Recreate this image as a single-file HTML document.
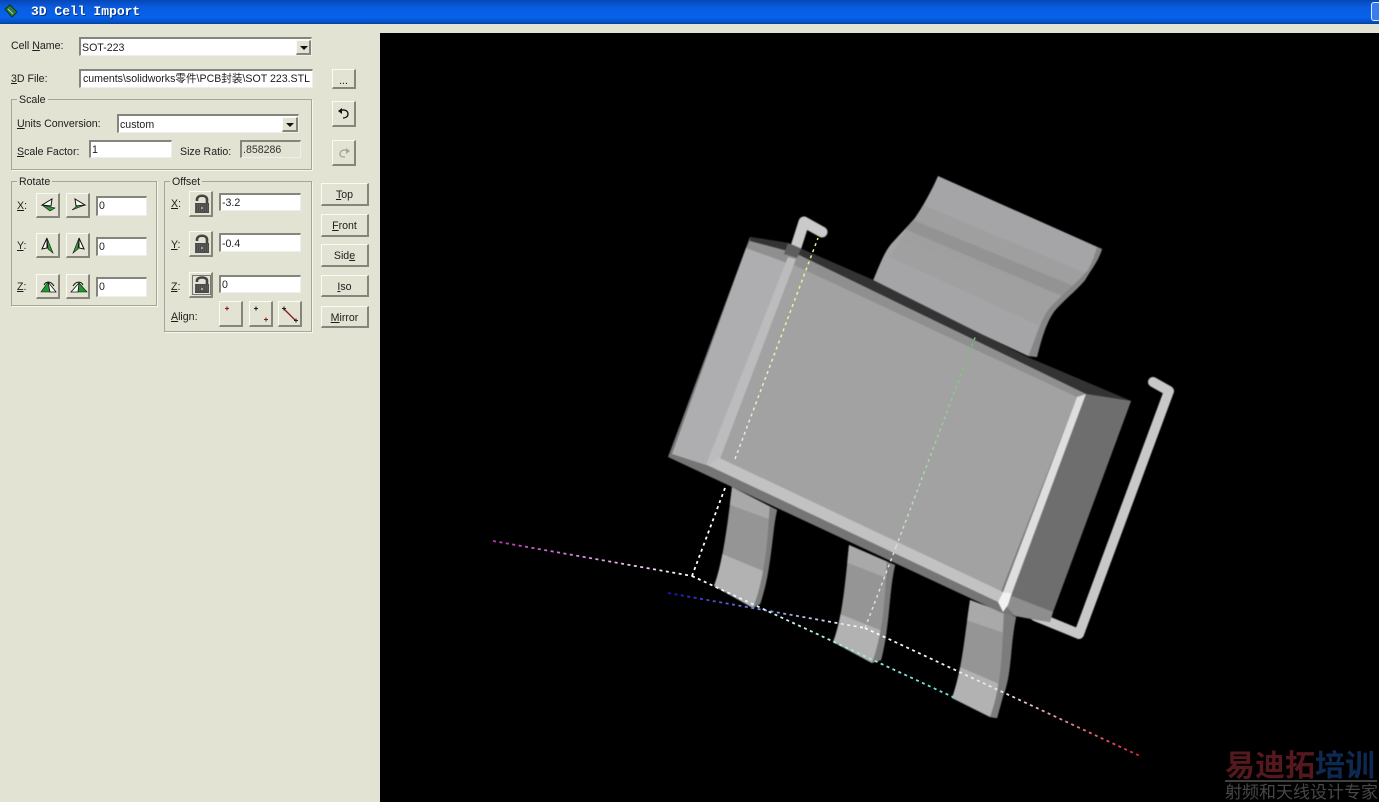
<!DOCTYPE html>
<html><head><meta charset="utf-8"><title>3D Cell Import</title>
<style>
html,body{margin:0;padding:0;background:#e3e3d4;width:1379px;height:802px;overflow:hidden}
body{position:relative;font-family:"Liberation Sans","Noto Sans CJK SC",sans-serif;font-size:10.6px;color:#1c1c1c}
.a{position:absolute}
.t{position:absolute;white-space:nowrap;line-height:13px;margin-top:1px}
.in{position:absolute;box-sizing:border-box;background:#fff;border-top:2px solid #85857c;border-left:2px solid #85857c;border-right:1px solid #eee;border-bottom:1px solid #eee;line-height:14px;padding:2px 0 0 1px;white-space:nowrap;overflow:hidden}
.b{position:absolute;box-sizing:border-box;background:#e3e3d4;border-top:1px solid #fbfbf5;border-left:1px solid #fbfbf5;border-right:2px solid #85857c;border-bottom:2px solid #85857c;text-align:center;line-height:23px}
.g{position:absolute;box-sizing:border-box;border:1px solid #a5a59a;box-shadow:1px 1px 0 #f6f6ee}
.l{position:absolute;background:#e3e3d4;padding:0 2px;line-height:13px;top:-6px;left:5px}
.ar{position:absolute;box-sizing:border-box;background:#e3e3d4;border-top:1px solid #fbfbf5;border-left:1px solid #fbfbf5;border-right:2px solid #85857c;border-bottom:2px solid #85857c}
.ar:after{content:"";position:absolute;left:3px;top:5px;border-left:4px solid transparent;border-right:4px solid transparent;border-top:4px solid #111}
.b svg{position:absolute;left:0;top:0}
</style></head><body>
<div class="a" style="left:0;top:0;width:1379px;height:24px;background:linear-gradient(#0647b6 0,#0a5be0 30%,#0763ec 70%,#0650c4 92%,#043f9e 100%)"></div>
<svg class="a" style="left:3px;top:3px" width="16" height="16"><path d="M2 6L7 2L14 9L9 14Z" fill="#2f7a3a" stroke="#0c3312"/><path d="M5 6L10 11" stroke="#9bd08a"/></svg>
<div class="t" style="left:31px;top:4px;color:#fff;font:bold 13px/14px 'Liberation Mono',monospace;text-shadow:1px 1px 0 #07317c">3D Cell Import</div>
<div class="a" style="left:1371px;top:2px;width:10px;height:19px;background:#3a7bee;border:1px solid #dfe8fa;border-radius:3px;box-sizing:border-box"></div>
<div class="a" style="left:380px;top:33px;width:999px;height:769px;background:#000"></div>

<div class="t" style="left:11px;top:39px">Cell <u>N</u>ame:</div>
<div class="in" style="left:79px;top:37px;width:233px;height:19px">SOT-223</div>
<div class="ar" style="left:296px;top:40px;width:15px;height:15px"></div>
<div class="t" style="left:11px;top:72px"><u>3</u>D File:</div>
<div class="in" style="left:79px;top:69px;width:234px;height:19px;padding-left:0"><span style="position:absolute;right:2px;top:1px">cuments\solidworks零件\PCB封装\SOT 223.STL</span></div>
<div class="b" style="left:332px;top:69px;width:24px;height:20px">...</div>
<div class="b" style="left:332px;top:101px;width:24px;height:26px"><svg width="22" height="24"><path d="M7 9C10 7 15 8 15 12C15 15 12 16 10 16" fill="none" stroke="#111" stroke-width="1.3"/><path d="M5 9L9 6V12Z" fill="#111"/></svg></div>
<div class="b" style="left:332px;top:140px;width:24px;height:26px"><svg width="22" height="24"><path d="M15 10C12 8 7 9 7 13C7 16 10 16 12 16" fill="none" stroke="#a5a59a" stroke-width="1.3"/><path d="M17 10L13 7V13Z" fill="#a5a59a"/></svg></div>

<div class="g" style="left:11px;top:99px;width:301px;height:71px"><div class="l">Scale</div></div>
<div class="t" style="left:17px;top:117px"><u>U</u>nits Conversion:</div>
<div class="in" style="left:117px;top:114px;width:182px;height:19px">custom</div>
<div class="ar" style="left:282px;top:117px;width:16px;height:15px"></div>
<div class="t" style="left:17px;top:145px"><u>S</u>cale Factor:</div>
<div class="in" style="left:89px;top:140px;width:83px;height:18px;padding-top:1px">1</div>
<div class="t" style="left:180px;top:145px">Size Ratio:</div>
<div class="in" style="left:240px;top:140px;width:61px;height:18px;background:#e3e3d4;padding-top:1px;color:#333">.858286</div>

<div class="g" style="left:11px;top:181px;width:146px;height:125px"><div class="l">Rotate</div></div>
<div class="t" style="left:17px;top:199px"><u>X</u>:</div>
<div class="t" style="left:17px;top:239px"><u>Y</u>:</div>
<div class="t" style="left:17px;top:280px"><u>Z</u>:</div>

<div class="b" style="left:36px;top:193px;width:24px;height:25px"><svg width="22" height="23"><path d="M5 11L15 5L14 12Z" fill="#fff" stroke="#111"/><path d="M5 11L18 14L13 17Z" fill="#2c9a35" stroke="#111" stroke-width=".6"/></svg></div>
<div class="b" style="left:66px;top:193px;width:24px;height:25px"><svg width="22" height="23"><path d="M18 11L8 5L9 12Z" fill="#fff" stroke="#111"/><path d="M18 11L5 16L10 12Z" fill="#2c9a35" stroke="#111" stroke-width=".6"/></svg></div>
<div class="in" style="left:96px;top:196px;width:51px;height:20px;padding-top:1px">0</div>
<div class="b" style="left:36px;top:233px;width:24px;height:25px"><svg width="22" height="23"><path d="M10 4L5 15L10 14Z" fill="#fff" stroke="#111"/><path d="M10 4L16 19L11 15Z" fill="#2c9a35" stroke="#111" stroke-width=".6"/></svg></div>
<div class="b" style="left:66px;top:233px;width:24px;height:25px"><svg width="22" height="23"><path d="M12 4L17 15L12 14Z" fill="#fff" stroke="#111"/><path d="M12 4L6 19L11 15Z" fill="#2c9a35" stroke="#111" stroke-width=".6"/></svg></div>
<div class="in" style="left:96px;top:237px;width:51px;height:19px;padding-top:1px">0</div>
<div class="b" style="left:36px;top:274px;width:24px;height:25px"><svg width="22" height="23"><path d="M11 7L4 17H13Z" fill="#1f9a2e" stroke="#111" stroke-width=".6"/><path d="M11 7L19 17H13Z" fill="#fff" stroke="#111" stroke-width=".8"/><path d="M7 10C9 6 14 6 17 11" fill="none" stroke="#111"/></svg></div>
<div class="b" style="left:66px;top:274px;width:24px;height:25px"><svg width="22" height="23"><path d="M12 8L20 17H11Z" fill="#1f9a2e" stroke="#111" stroke-width=".6"/><path d="M12 8L4 17H11Z" fill="#fff" stroke="#111" stroke-width=".8"/><path d="M6 11C9 6 14 6 16 10" fill="none" stroke="#111"/></svg></div>
<div class="in" style="left:96px;top:277px;width:51px;height:20px;padding-top:1px">0</div>

<div class="g" style="left:164px;top:181px;width:148px;height:151px"><div class="l">Offset</div></div>
<div class="t" style="left:171px;top:197px"><u>X</u>:</div>
<div class="t" style="left:171px;top:238px"><u>Y</u>:</div>
<div class="t" style="left:171px;top:280px"><u>Z</u>:</div>
<div class="t" style="left:171px;top:310px"><u>A</u>lign:</div>

<div class="b" style="left:189px;top:191px;width:24px;height:26px"><svg width="22" height="24"><path d="M7 9V7.500C7 2.500 17 2.500 17 7.500V12" fill="none" stroke="#444" stroke-width="2.600"/><rect x="5" y="11" width="14" height="10" fill="#4a4a4a"/><path d="M5 13H19M5 15H19M5 17H19M5 19H19" stroke="#6a6a6a" stroke-dasharray="1 1"/><circle cx="12" cy="16" r="1" fill="#bbb"/></svg></div>
<div class="in" style="left:219px;top:193px;width:82px;height:18px;padding-top:1px">-3.2</div>
<div class="b" style="left:189px;top:231px;width:24px;height:26px"><svg width="22" height="24"><path d="M7 9V7.500C7 2.500 17 2.500 17 7.500V12" fill="none" stroke="#444" stroke-width="2.600"/><rect x="5" y="11" width="14" height="10" fill="#4a4a4a"/><path d="M5 13H19M5 15H19M5 17H19M5 19H19" stroke="#6a6a6a" stroke-dasharray="1 1"/><circle cx="12" cy="16" r="1" fill="#bbb"/></svg></div>
<div class="in" style="left:219px;top:233px;width:82px;height:19px;padding-top:2px">-0.4</div>
<div class="b" style="left:189px;top:272px;width:24px;height:26px"><svg width="22" height="24"><rect x="2.500" y="2.500" width="18" height="19" fill="none" stroke="#111" stroke-dasharray="1 1"/><path d="M7 9V7.500C7 3.500 17 3.500 17 7.500V12" fill="none" stroke="#444" stroke-width="2.600"/><rect x="5" y="11" width="14" height="9" fill="#4a4a4a"/><path d="M5 13H19M5 15H19M5 17H19" stroke="#6a6a6a" stroke-dasharray="1 1"/><circle cx="12" cy="16" r="1" fill="#bbb"/></svg></div>
<div class="in" style="left:219px;top:275px;width:82px;height:18px;padding-top:1px">0</div>

<div class="b" style="left:219px;top:301px;width:24px;height:26px"><svg width="22" height="24"><path d="M5 6.500H9M7 4.500V8.500" stroke="#8a1a1a" stroke-width="1.100"/></svg></div>
<div class="b" style="left:249px;top:301px;width:24px;height:26px"><svg width="22" height="24"><path d="M4 6.500H8M6 4.500V8.500" stroke="#222" stroke-width="1.100"/><path d="M14 17.500H18M16 15.500V19.500" stroke="#8a1a1a" stroke-width="1.100"/></svg></div>
<div class="b" style="left:278px;top:301px;width:24px;height:26px"><svg width="22" height="24"><path d="M5 7L16 18" stroke="#8a1a1a" stroke-width="1.300"/><path d="M3 6.500H7M5 4.500V8.500M15 18.500H19M17 16.500V20.500" stroke="#222" stroke-width="1.100"/></svg></div>

<div class="b" style="left:321px;top:183px;width:48px;height:23px"><u>T</u>op</div>
<div class="b" style="left:321px;top:214px;width:48px;height:23px"><u>F</u>ront</div>
<div class="b" style="left:321px;top:244px;width:48px;height:23px">Sid<u>e</u></div>
<div class="b" style="left:321px;top:275px;width:48px;height:22px"><u>I</u>so</div>
<div class="b" style="left:321px;top:306px;width:48px;height:22px"><u>M</u>irror</div>

<svg class="a" style="left:0;top:0" width="1379" height="802" fill="none">
<defs>
<linearGradient id="gm" gradientUnits="userSpaceOnUse" x1="493" y1="541" x2="692" y2="576"><stop offset="0" stop-color="#c030c0"/><stop offset="1" stop-color="#fff"/></linearGradient>
<linearGradient id="gb" gradientUnits="userSpaceOnUse" x1="668" y1="593" x2="865" y2="628"><stop offset="0" stop-color="#1414c4"/><stop offset="1" stop-color="#fff"/></linearGradient>
<linearGradient id="gr" gradientUnits="userSpaceOnUse" x1="865" y1="628" x2="1142" y2="757"><stop offset="0" stop-color="#fff"/><stop offset=".5" stop-color="#f0e0e0"/><stop offset="1" stop-color="#e02030"/></linearGradient>
<linearGradient id="gc" gradientUnits="userSpaceOnUse" x1="692" y1="576" x2="955" y2="698"><stop offset="0" stop-color="#fff"/><stop offset="1" stop-color="#60e0d0"/></linearGradient>
<linearGradient id="gy" gradientUnits="userSpaceOnUse" x1="735" y1="460" x2="818" y2="240"><stop offset="0" stop-color="#e8e8e8"/><stop offset="1" stop-color="#f0f080"/></linearGradient>
<linearGradient id="gg" gradientUnits="userSpaceOnUse" x1="865" y1="628" x2="976" y2="335"><stop offset="0" stop-color="#eee"/><stop offset="1" stop-color="#70c070"/></linearGradient>
<clipPath id="c0"><path d="M938 176L1102 249C1098 262 1092 268 1085 280C1075 292 1060 303 1053 313C1045 325 1040 345 1037 357L1028 356L872 283C880 264 885 250 893 242C900 234 908 226 915 218C922 208 932 190 938 176Z"/></clipPath>
<clipPath id="c1"><path d="M732 487L777 510C772 530 772 570 760 604L753 608L714 586C722 565 727 530 732 487Z"/></clipPath>
<clipPath id="c2"><path d="M849 545L895 565C889 590 890 625 881 660L872 663L833 642C842 620 845 585 849 545Z"/></clipPath>
<clipPath id="c3"><path d="M970 600L1016 617C1010 645 1012 675 1003 696L997 718L990 717L952 698C962 670 964 640 970 600Z"/></clipPath>
</defs>

<g style="filter:blur(.5px)">
<!-- back lead -->
<g clip-path="url(#c0)">
<rect x="860" y="170" width="250" height="195" fill="#a5a5a8"/>
<path d="M923 205L1092 276L1070 330L900 240Z" fill="#9f9fa0"/>
<path d="M913 220L1076 287L1067 298L905 229Z" fill="#939393"/>
<path d="M900 240L1067 298L1045 328L890 257Z" fill="#a0a0a0"/>
<path d="M1097 247L1110 250L1050 370L1028 357C1035 340 1040 322 1048 310C1058 298 1075 285 1088 270C1092 262 1095 255 1097 247Z" fill="#858587"/>
</g>

<!-- wires -->
<path d="M822 232L804 222L795 250" stroke="#cacaca" stroke-width="11" stroke-linecap="round" stroke-linejoin="round"/>
<path d="M1153 382L1169 391L1079 634L1035 616" stroke="#c8c8c8" stroke-width="10" stroke-linecap="round" stroke-linejoin="round"/>

<!-- legs -->
<g clip-path="url(#c1)"><rect x="705" y="480" width="80" height="135" fill="#959595"/>
<path d="M725 480L785 500V525L725 503Z" fill="#a9a9a9"/>
<path d="M715 551L785 580V615H700V560Z" fill="#b2b2b2"/>
<path d="M770 500L785 505V605L753 608C766 575 768 535 770 500Z" fill="#7c7c7c"/></g>
<g clip-path="url(#c2)"><rect x="825" y="540" width="80" height="130" fill="#959595"/>
<path d="M840 538L905 565V585L840 560Z" fill="#a9a9a9"/>
<path d="M835 612L905 640V670H825V620Z" fill="#b2b2b2"/>
<path d="M887 560L905 565V665L872 663C884 630 885 595 887 560Z" fill="#7c7c7c"/></g>
<g clip-path="url(#c3)"><rect x="945" y="595" width="80" height="130" fill="#959595"/>
<path d="M960 595L1025 620V640L960 618Z" fill="#a9a9a9"/>
<path d="M955 665L1025 695V725H945V672Z" fill="#b2b2b2"/>
<path d="M1004 610L1025 617V720L990 717C1002 685 1002 650 1004 610Z" fill="#7c7c7c"/></g>

<!-- body -->
<path d="M750 237L788 243L873 280L1027 357L1131 401L1053 612L1050 622L1037 620L1015 616L1002 613L668 457Z" fill="#757575"/>
<path d="M750 237L788 243L873 280L1027 357L1131 401L1086 394L795 253L750 241Z" fill="#333"/>
<path d="M750 241L795 253L1086 394L1077 398L792 266L746 248Z" fill="#8f8f8f"/>
<path d="M746 248L790 264L709 466L672 454Z" fill="#aeaeb0"/>
<path d="M788 243L801 249L797 258L784 254Z" fill="#5e5e5e"/>
<path d="M1086 394L1131 401L1053 612L1012 596Z" fill="#6e6e6e"/>
<path d="M1012 596L1053 612L1050 622L1037 620L1015 616L1006 606Z" fill="#8e8e8e"/>
<path d="M792 264L1077 397L1001 592L720 458Z" fill="#a2a2a2"/>
<path d="M788 257L796 259L720 459L706 465Z" fill="#bcbcbe"/>
<path d="M707 465L720 458L1003 592L998 602Z" fill="#c2c2c2"/>
<path d="M1077 397L1086 394L1012 593L1003 592Z" fill="#dedede"/>
<path d="M1003 592L1012 593L1008 605L1003 612L998 602Z" fill="#f2f2f2"/>
</g>

<!-- dashed axes -->
<g stroke-width="1.800" stroke-dasharray="3 3.500">
<path d="M493 541L692 576" stroke="url(#gm)"/>
<path d="M668 593L865 628" stroke="url(#gb)"/>
<path d="M865 628L1142 757" stroke="url(#gr)"/>
<path d="M692 576L955 698" stroke="url(#gc)"/>
<path d="M692 576L725 488" stroke="#fff"/>
<path d="M735 459L818 238" stroke="url(#gy)" stroke-width="1.500"/>
<path d="M865 628L896 547" stroke="#ddd" stroke-width="1.500"/>
<path d="M896 547L976 335" stroke="url(#gg)" stroke-width="1.500"/>
</g>

<!-- watermark -->
<text x="1225" y="776" font-family="'Noto Sans CJK SC',sans-serif" font-size="30" font-weight="700" fill="#55181e">易迪拓</text>
<text x="1315" y="776" font-family="'Noto Sans CJK SC',sans-serif" font-size="30" font-weight="700" fill="#0f2a52">培训</text>
<path d="M1225 781H1377" stroke="#555" stroke-width="1.500"/>
<text x="1225" y="798" font-family="'Noto Sans CJK SC',sans-serif" font-size="17" fill="#484848">射频和天线设计专家</text>
</svg>
</body></html>
